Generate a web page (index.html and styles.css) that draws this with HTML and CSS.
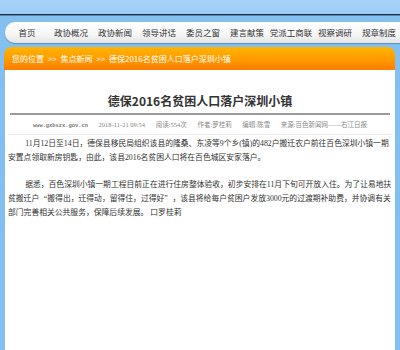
FILE: index.html
```html
<!DOCTYPE html>
<html lang="zh-CN">
  <head>
    <meta charset="utf-8">
    <title>德保2016名贫困人口落户深圳小镇</title>
    <link rel="stylesheet" href="styles.css">
  </head>
  <body>
    <div class="top"></div>
    <ul class="nav">
      <li>首页</li>
      <li>政协概况</li>
      <li>政协新闻</li>
      <li>领导讲话</li>
      <li>委员之窗</li>
      <li>建言献策</li>
      <li>党派工商联</li>
      <li>视察调研</li>
      <li>规章制度</li>
    </ul>
    <div class="crumb">您的位置 <span class="sep">&gt;&gt;</span> 焦点新闻 <span class="sep">&gt;&gt;</span> 德保2016名贫困人口落户深圳小镇</div>
    <div class="main">
      <h1 class="title">德保2016名贫困人口落户深圳小镇</h1>
      <p class="meta">
        <span class="site">www.gxbszx.gov.cn</span>
        <span>2018-11-21 09:54</span>
        <span>阅读:554次</span>
        <span>作者:罗桂莉</span>
        <span>编辑:陈雪</span>
        <span>来源:百色新闻网——右江日报</span>
      </p>
      <div class="article">
        <p>11月12日至14日，德保县移民局组织该县的隆桑、东凌等9个乡(镇)的482户搬迁农户前往百色深圳小镇一期安置点领取新房钥匙，由此，该县2016名贫困人口将在百色城区安家落户。</p>
        <p>据悉，百色深圳小镇一期工程目前正在进行住房整体验收，初步安排在11月下旬可开放入住。为了让易地扶贫搬迁户<span class="quote open">“搬得出，</span>迁得动，留得住，<span class="quote close">过得好”</span>，该县将给每户贫困户发放3000元的过渡期补助费，并协调有关部门完善相关公共服务，保障后续发展。 口罗桂莉</p>
      </div>
    </div>
  </body>
</html>
```

FILE: styles.css
```css
html, body {
  margin: 0px;
  padding: 0px;
  height: 100%;
}

body {
  display: flex;
  flex-direction: column;
  background-color: #84c0ef;
  font-family: "Liberation Serif", "Noto Sans CJK SC", serif;
  overflow: hidden;
}

.top {
  flex: 0 0 14px;
  background: linear-gradient(#a8d3f7, #9bcbf4);
  border-bottom: 1px solid #1f2f44;
  box-shadow: 0 1px 0 #5d86ad;
}

.nav {
  list-style: none;
  display: flex;
  flex: 0 0 21px;
  margin: 7px 0 0 5px;
  padding: 0px;
  overflow: hidden;
  background: linear-gradient(#ffffff, #f6f6f6 60%, #e4e4e4);
  border-radius: 10px 0 0 10px;
  box-shadow: 0 1px 1px #5f8db8;
}

.nav li {
  flex: 0 0 44px;
  text-align: center;
  line-height: 21px;
  font-family: "Noto Sans CJK SC", sans-serif;
  font-size: 8.5px;
  color: #333;
}

.crumb {
  flex: 0 0 23px;
  margin: 4px 5px 0 4px;
  line-height: 23px;
  padding-left: 8px;
  border-radius: 8px 8px 0 0;
  background: linear-gradient(#ffb400, #ff9a00 55%, #ff7c00);
  color: #fff;
  font-family: "Noto Sans CJK SC", sans-serif;
  font-size: 8px;
}

.crumb .sep {
  margin: 0 2px;
}

.main {
  flex: 1;
  margin: 0 5px;
  padding: 0 1px 0 3px;
  background-color: #fff;
}

.title {
  margin: 0 4px 0 2px;
  padding: 21px 0 2px 0;
  line-height: 20px;
  text-align: center;
  font-family: "Noto Sans CJK SC", sans-serif;
  font-size: 12px;
  font-weight: bold;
  color: #333;
  border-bottom: 2px solid #9a9a9a;
}

.meta {
  margin: 5px 2px 0 0;
  padding-bottom: 3px;
  line-height: 10px;
  text-align: center;
  font-size: 6.5px;
  color: #8a8a8a;
  border-bottom: 1px solid #ececec;
}

.meta span {
  margin: 0 4.5px;
}

.meta .site {
  font-family: "Liberation Mono", monospace;
  font-size: 5.4px;
  font-weight: bold;
  color: #777;
}

.article {
  padding-top: 2px;
}

.article p {
  margin: 0 0 13px 0;
  text-indent: 2.2em;
  font-size: 7.8px;
  line-height: 14px;
  color: #333;
}

/* full-width quote marks, as the original font draws them */
.article .quote.open {
  padding-left: 0.6em;
}

.article .quote.close {
  padding-right: 0.6em;
}
```
